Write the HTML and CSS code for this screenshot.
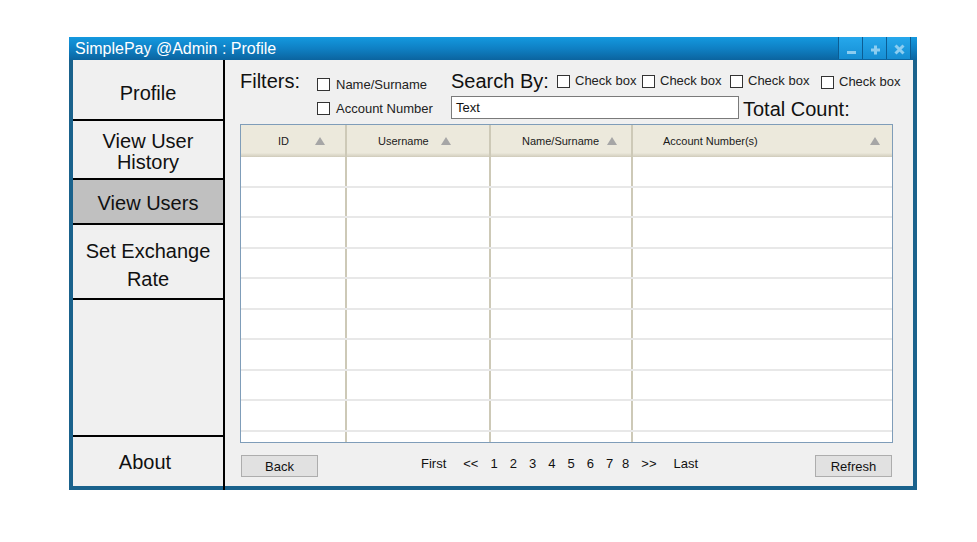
FILE: index.html
```html
<!DOCTYPE html>
<html lang="en">
<head>
<meta charset="utf-8">
<title>SimplePay @Admin : Profile</title>
<link rel="stylesheet" href="styles.css">
</head>
<body>
<div class="window">
  <div class="titlebar">
    <span class="title">SimplePay @Admin : Profile</span>
    <div class="title-buttons">
      <div class="tb-btn"><svg width="23" height="22" viewBox="0 0 23 22"><rect x="8" y="14" width="9" height="3" fill="#8ccdf0"/></svg></div>
      <div class="tb-btn"><svg width="23" height="22" viewBox="0 0 23 22"><rect x="8" y="11.5" width="9" height="3" fill="#8ccdf0"/><rect x="11" y="8.5" width="3" height="9" fill="#8ccdf0"/></svg></div>
      <div class="tb-btn"><svg width="23" height="22" viewBox="0 0 23 22"><path d="M8.5 8.5 L16.5 16.5 M16.5 8.5 L8.5 16.5" stroke="#8ccdf0" stroke-width="3"/></svg></div>
    </div>
  </div>
  <div class="frame">
    <nav class="sidebar">
      <div class="nav-item nav-profile">Profile</div>
      <div class="nav-item nav-history">View User<br>History</div>
      <div class="nav-item nav-users active">View Users</div>
      <div class="nav-item nav-rate">Set Exchange<br>Rate</div>
      <div class="nav-item nav-spacer"></div>
      <div class="nav-item nav-about">About</div>
    </nav>
    <main class="main">
      <div class="toolbar">
        <div class="filters-label">Filters:</div>
        <div class="filter-checks">
          <label class="check"><span class="box"></span>Name/Surname</label>
          <label class="check"><span class="box"></span>Account Number</label>
        </div>
        <div class="search">
          <div class="search-row1">
            <span class="search-label">Search By:</span>
            <label class="check"><span class="box"></span>Check box</label>
            <label class="check"><span class="box"></span>Check box</label>
            <label class="check"><span class="box"></span>Check box</label>
            <label class="check check-low"><span class="box"></span>Check box</label>
          </div>
          <div class="search-row2">
            <div class="text-input">Text</div>
            <span class="total">Total Count:</span>
          </div>
        </div>
      </div>
      <div class="grid">
        <div class="cols grid-head">
          <div class="th th-id"><span>ID</span><svg class="sort" width="10" height="8" viewBox="0 0 10 8"><polygon points="5,0 10,8 0,8" fill="#a6a6a6"/></svg></div>
          <div class="th th-user"><span>Username</span><svg class="sort" width="10" height="8" viewBox="0 0 10 8"><polygon points="5,0 10,8 0,8" fill="#a6a6a6"/></svg></div>
          <div class="th th-name"><span>Name/Surname</span><svg class="sort" width="10" height="8" viewBox="0 0 10 8"><polygon points="5,0 10,8 0,8" fill="#a6a6a6"/></svg></div>
          <div class="th th-acct"><span>Account Number(s)</span><svg class="sort" width="10" height="8" viewBox="0 0 10 8"><polygon points="5,0 10,8 0,8" fill="#a6a6a6"/></svg></div>
        </div>
        <div class="grid-body">
          <div class="cols tr"><div class="td"></div><div class="td"></div><div class="td"></div><div class="td"></div></div>
          <div class="cols tr"><div class="td"></div><div class="td"></div><div class="td"></div><div class="td"></div></div>
          <div class="cols tr"><div class="td"></div><div class="td"></div><div class="td"></div><div class="td"></div></div>
          <div class="cols tr"><div class="td"></div><div class="td"></div><div class="td"></div><div class="td"></div></div>
          <div class="cols tr"><div class="td"></div><div class="td"></div><div class="td"></div><div class="td"></div></div>
          <div class="cols tr"><div class="td"></div><div class="td"></div><div class="td"></div><div class="td"></div></div>
          <div class="cols tr"><div class="td"></div><div class="td"></div><div class="td"></div><div class="td"></div></div>
          <div class="cols tr"><div class="td"></div><div class="td"></div><div class="td"></div><div class="td"></div></div>
          <div class="cols tr"><div class="td"></div><div class="td"></div><div class="td"></div><div class="td"></div></div>
          <div class="cols tr"><div class="td"></div><div class="td"></div><div class="td"></div><div class="td"></div></div>
        </div>
      </div>
      <div class="footer">
        <button class="btn">Back</button>
        <div class="pager">
          <span class="pg-first">First</span>
          <span>&lt;&lt;</span>
          <span>1</span><span>2</span><span>3</span><span>4</span><span>5</span><span>6</span><span>7</span><span class="pg-tight">8</span>
          <span>&gt;&gt;</span>
          <span class="pg-last">Last</span>
        </div>
        <button class="btn btn-refresh">Refresh</button>
      </div>
    </main>
  </div>
</div>
</body>
</html>
```
FILE: styles.css
```css
body {
  margin: 0;
  background: #fff;
  font-family: "Liberation Sans", Arial, sans-serif;
  color: #111;
}

.window {
  margin: 37px 0 0 69px;
  width: 848px;
}

.titlebar {
  height: 23px;
  display: flex;
  background: linear-gradient(to bottom, #1499df 0%, #0f80c4 50%, #0b649f 100%);
}

.title {
  color: #fff;
  font-size: 16px;
  line-height: 23px;
  padding: 0 0 0 6px;
  margin-top: 0;
}

.title-buttons {
  margin-left: auto;
  margin-right: 6px;
  display: flex;
  height: 22px;
  border-right: 1px solid #0c5d93;
}

.tb-btn {
  width: 23px;
  height: 22px;
  border-left: 1px solid #0c5d93;
  background: linear-gradient(to bottom, #26a8ec, #168ed3);
}

.tb-btn svg {
  display: block;
}

.frame {
  display: flex;
  height: 426px;
  border: 4px solid #1a628c;
  border-top: 0;
  background: #f0f0f0;
}

.sidebar {
  width: 150px;
  flex: none;
  border-right: 2px solid #000;
  display: flex;
  flex-direction: column;
  position: relative;
  background: #f0f0f0;
}

.sidebar::after {
  content: "";
  position: absolute;
  right: -2px;
  bottom: -5px;
  width: 2px;
  height: 5px;
  background: #000;
}

.nav-item {
  box-sizing: border-box;
  border-bottom: 2px solid #000;
  display: flex;
  align-items: center;
  justify-content: center;
  text-align: center;
  font-size: 20px;
  color: #111;
}

.nav-profile { height: 61px; padding-top: 7px; }
.nav-history { height: 59px; padding-top: 4px; line-height: 21px; }
.nav-users { height: 45px; padding-top: 3px; }
.nav-rate { height: 75px; padding-top: 7px; line-height: 28px; }
.nav-spacer { height: 137px; }
.nav-about { height: 49px; border-bottom: 0; padding-top: 1px; padding-right: 6px; }

.active {
  background: #c0c0c0;
}

.main {
  flex: 1;
  display: flex;
  flex-direction: column;
  min-width: 0;
}

.toolbar {
  height: 64px;
  box-sizing: border-box;
  padding: 11px 0 0 15px;
  display: flex;
  align-items: flex-start;
}

.filters-label {
  width: 77px;
  flex: none;
  font-size: 20px;
  line-height: 21px;
}

.filter-checks {
  width: 134px;
  flex: none;
  display: flex;
  flex-direction: column;
  padding-top: 1px;
}

.check {
  display: flex;
  align-items: center;
  font-size: 13px;
  color: #222;
  white-space: nowrap;
}

.filter-checks .check {
  height: 24px;
  gap: 6px;
}

.box {
  width: 13px;
  height: 13px;
  box-sizing: border-box;
  border: 1px solid #333;
  background: #fff;
  flex: none;
}

.search {
  display: flex;
  flex-direction: column;
}

.search-row1 {
  display: grid;
  grid-template-columns: 106px 85px 88px 91px auto;
  height: 25px;
  align-items: start;
}

.search-label {
  font-size: 20px;
  line-height: 21px;
}

.search-row1 .check {
  margin-top: 2px;
  line-height: 16px;
  gap: 5px;
}

.search-row1 .check-low {
  margin-top: 3px;
}

.search-row2 {
  display: flex;
  align-items: flex-start;
}

.text-input {
  width: 288px;
  height: 23px;
  box-sizing: border-box;
  border: 1px solid #7a7a7a;
  background: #fff;
  font-size: 13px;
  line-height: 21px;
  padding-left: 4px;
}

.total {
  margin-left: 4px;
  margin-top: 2px;
  font-size: 20px;
  line-height: 23px;
}

.grid {
  margin: 0 20px 0 15px;
  height: 319px;
  box-sizing: border-box;
  border: 1px solid #7f9db9;
  background: #fff;
  display: flex;
  flex-direction: column;
  overflow: hidden;
}

.cols {
  display: grid;
  grid-template-columns: 106px 144px 142px 1fr;
}

.grid-head {
  height: 32px;
  flex: none;
  background: linear-gradient(to bottom, #ece9dc 0, #ece9dc 28px, #e3e0d2 29px, #d8d4c4 31px, #cdc9b9 32px);
}

.th {
  display: flex;
  align-items: center;
  border-right: 2px solid #cdc9b7;
  font-size: 11px;
  color: #1a1a1a;
}

.th .sort {
  margin-left: auto;
  display: block;
}

.th-id { padding: 0 20px 0 37px; }
.th-user { padding: 0 38px 0 31px; }
.th-name { padding: 0 14px 0 31px; }
.th-acct { padding: 0 12px 0 30px; }

.th:last-child,
.td:last-child {
  border-right: 0;
}

.grid-body {
  flex: 1;
  overflow: hidden;
}

.tr {
  height: 30.5px;
  box-sizing: border-box;
  border-bottom: 2px solid #e8e8e8;
}

.td {
  border-right: 2px solid #cdc9b7;
}

.footer {
  flex: 1;
  display: flex;
  align-items: flex-start;
  padding: 12px 21px 0 16px;
}

.btn {
  width: 77px;
  height: 22px;
  box-sizing: border-box;
  padding: 0;
  border: 1px solid #adadad;
  background: #e1e1e1;
  font-family: "Liberation Sans", Arial, sans-serif;
  font-size: 13px;
  color: #111;
}

.btn-refresh {
  margin-left: auto;
}

.pager {
  margin-left: 103px;
  display: flex;
  gap: 12px;
  font-size: 13px;
  line-height: 17px;
  color: #111;
}

.pg-first { margin-right: 5px; }
.pg-last { margin-left: 5px; }
.pg-tight { margin-left: -3px; }
```
